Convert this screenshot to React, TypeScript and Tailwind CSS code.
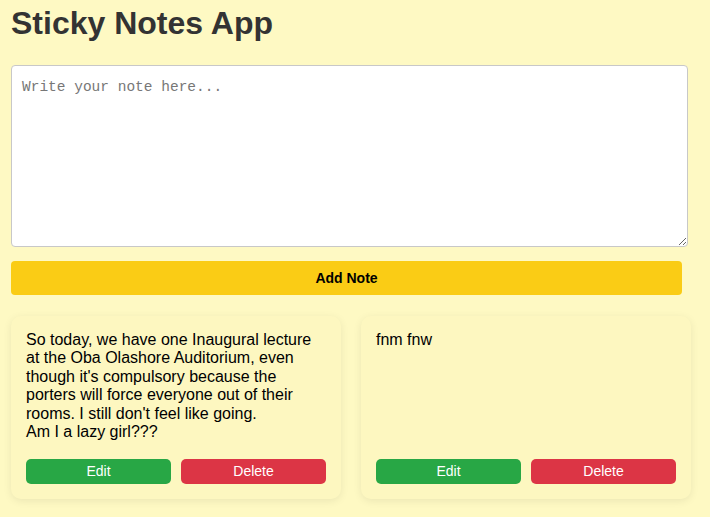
const notes = [
  {
    id: 1,
    text: "So today, we have one Inaugural lecture at the Oba Olashore Auditorium, even though it's compulsory because the porters will force everyone out of their rooms. I still don't feel like going.\nAm I a lazy girl???",
  },
  { id: 2, text: 'fnm fnw' },
];

export default function App() {
  return (
    <div className="min-h-[517px] bg-[#fef9c3] pl-[11px] pt-[5px] font-['Liberation_Sans',Arial,sans-serif]">
      <h1 className="text-[32px] font-bold leading-[37px] text-[#333] mb-[23px]">Sticky Notes App</h1>

      <textarea
        placeholder="Write your note here..."
        className="block w-[677px] h-[182px] rounded-[4px] border border-[#c8c8c8] bg-white px-[10px] pt-[11px] pb-[9px] font-['Liberation_Mono',monospace] text-[14.5px] text-black placeholder:text-[#777] outline-none"
      />

      <button className="mt-[14px] block h-[34px] w-[671px] rounded-[4px] bg-[#facc15] text-[14px] font-bold text-black">
        Add Note
      </button>

      <div className="mt-[21px] grid grid-cols-[330px_330px] gap-5 pb-5">
        {notes.map((note) => (
          <div key={note.id} className="flex flex-col rounded-[10px] bg-[#fdf7c0] p-[15px] shadow-[0_2px_8px_rgba(0,0,0,0.08)]">
            <p className="mb-[18px] whitespace-pre-wrap text-[16px] leading-[18.4px] text-black">{note.text}</p>
            <div className="mt-auto flex gap-[10px]">
              <button className="h-[25px] flex-1 rounded-[5px] bg-[#28a745] text-[14px] text-white">Edit</button>
              <button className="h-[25px] flex-1 rounded-[5px] bg-[#dc3545] text-[14px] text-white">Delete</button>
            </div>
          </div>
        ))}
      </div>
    </div>
  );
}
